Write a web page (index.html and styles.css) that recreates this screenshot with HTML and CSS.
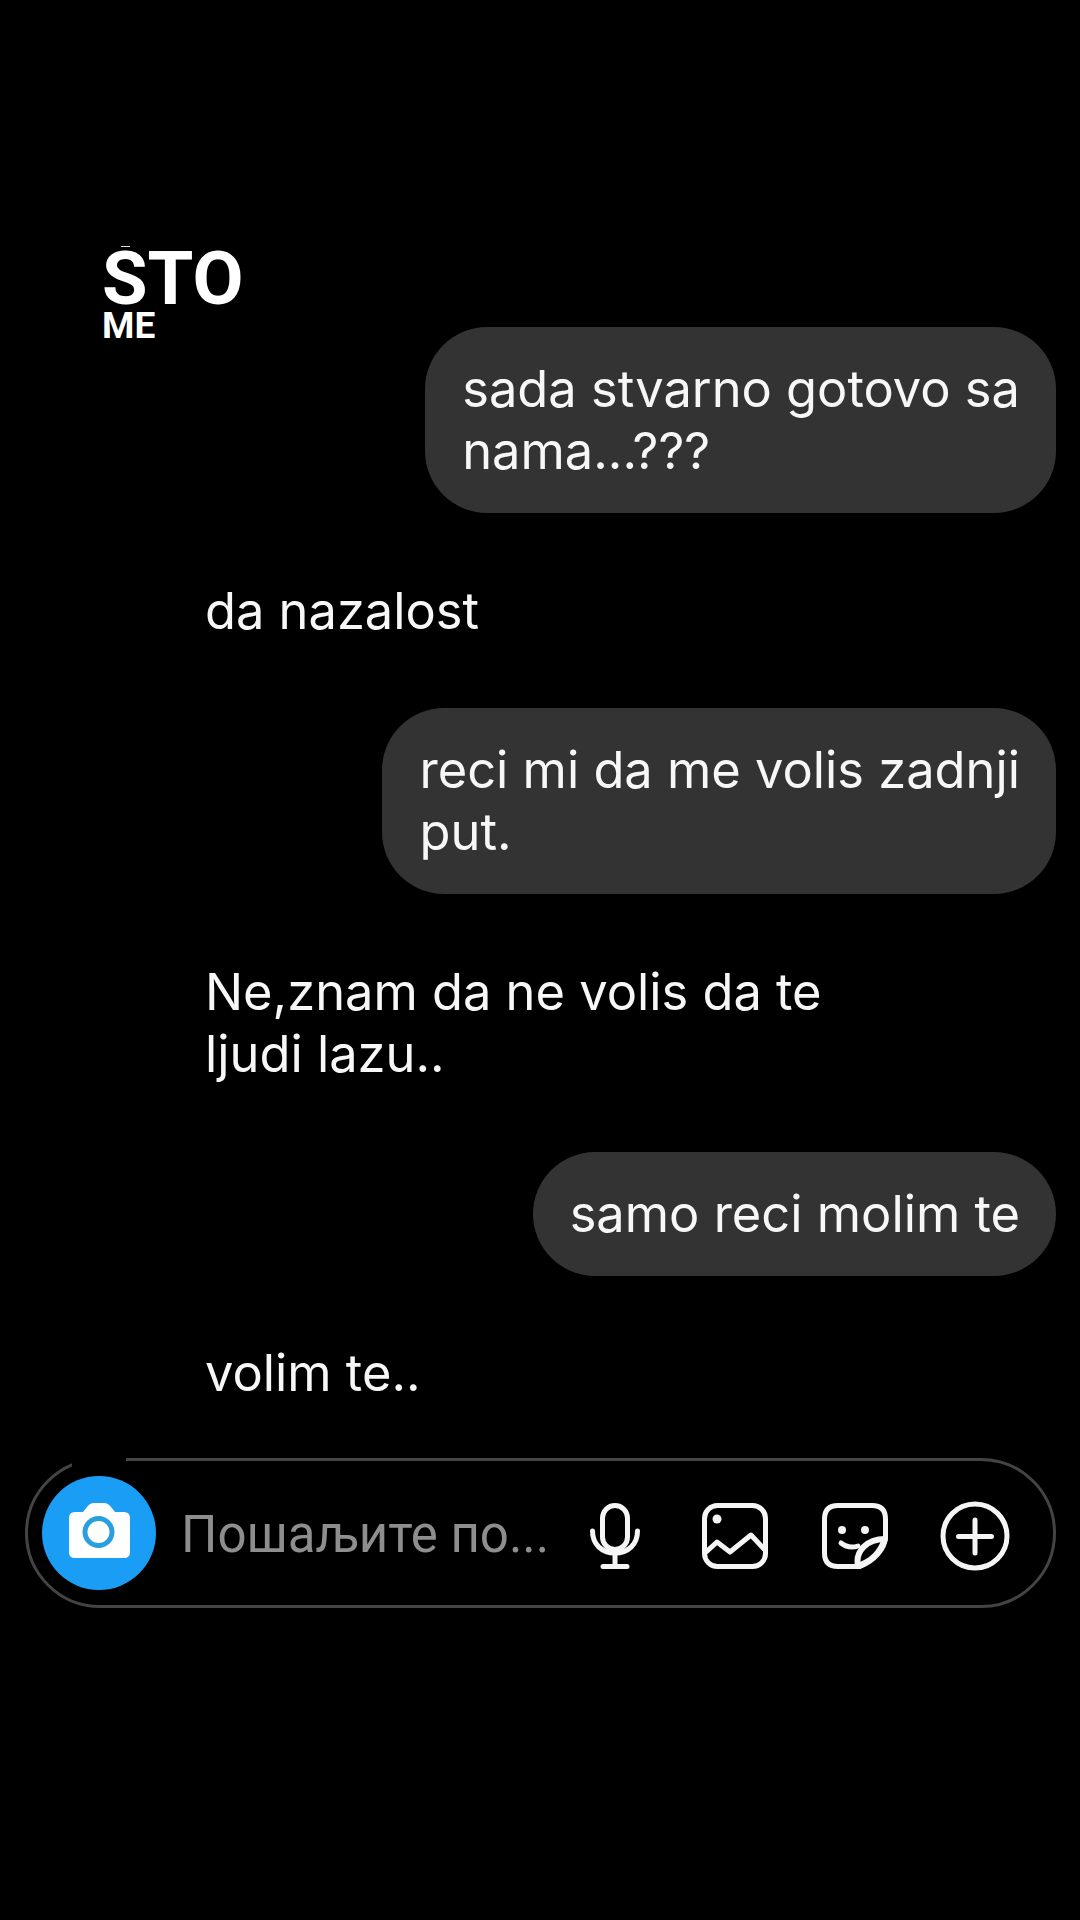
FILE: index.html
```html
<!DOCTYPE html>
<html>
	<head>
		<meta charset="utf-8">
		<title>Chat</title>
		<link rel="stylesheet" href="styles.css">
	</head>
	<body>
		<div class="caption">
			<div class="caption-big">STO</div>
			<div class="caption-small">ME</div>
		</div>

		<div class="thread">
			<div class="msg sent">sada stvarno gotovo sa<br>nama...???</div>
			<div class="msg received">da nazalost</div>
			<div class="msg sent">reci mi da me volis zadnji<br>put.</div>
			<div class="msg received">Ne,znam da ne volis da te<br>ljudi lazu..</div>
			<div class="msg sent">samo reci molim te</div>
			<div class="msg received">volim te..</div>
		</div>

		<div class="composer">
			<div class="composer-gap"></div>
			<div class="camera">
				<svg width="61" height="55" viewBox="0 0 61 55">
					<path class="camera-body" d="M6 9h8l4-5q3-4 7-4h10q4 0 7 4l4 5h9q6 0 6 6v34q0 6-6 6H6q-6 0-6-6V15q0-6 6-6z"/>
					<circle class="camera-lens" cx="29.500" cy="29" r="13.500"/>
				</svg>
			</div>
			<div class="placeholder">Пошаљите по...</div>
			<div class="icon-slot">
				<svg width="50" height="66" viewBox="0 0 50 66" class="icon">
					<rect x="12.5" y="2.5" width="25" height="44" rx="12.5"/>
					<path d="M2.5 28c0 13 9 22 22.500 22s22.500-9 22.500-22"/>
					<path d="M25 50v13M13 63.500h24"/>
				</svg>
			</div>
			<div class="icon-slot">
				<svg width="66" height="66" viewBox="0 0 66 66" class="icon">
					<rect x="2.500" y="2.500" width="61" height="61" rx="13"/>
					<circle class="dot" cx="15" cy="16" r="4.500"/>
					<path d="M3 50l12-11 13 10 21-17 14 15"/>
				</svg>
			</div>
			<div class="icon-slot">
				<svg width="66" height="66" viewBox="0 0 66 66" class="icon">
					<path d="M38 63.500H16q-13.500 0-13.500-13.500V16Q2.500 2.500 16 2.500h34q13.500 0 13.500 13.500v18C63 46 52 58 38 63.500z"/>
					<circle class="dot" cx="20" cy="27" r="4"/>
					<circle class="dot" cx="43" cy="27" r="4"/>
					<path d="M19 40c5 4 11 5 17 3"/>
					<path class="peel" d="M36 63c-3-15 9-27 27-27C58 50 50 58 36 63z"/>
				</svg>
			</div>
			<div class="icon-slot">
				<svg width="70" height="70" viewBox="0 0 70 70" class="icon">
					<circle cx="35" cy="35" r="32"/>
					<path d="M35 19v33M18.500 35.500h33"/>
				</svg>
			</div>
		</div>
	</body>
</html>
```

FILE: styles.css
```css
html, body {
	margin: 0;
	height: 100%;
}
body {
	background-color: #000;
	color: #f7f7f7;
	font-family: "Inter", "Liberation Sans", sans-serif;
	overflow: hidden;
	padding-top: 244px;
	box-sizing: border-box;
}

/* caption burned into the video */
.caption {
	margin-left: 102px;
	height: 83px;
	font-family: "Roboto", "Liberation Sans", sans-serif;
	font-weight: bold;
	color: #fff;
}
.caption-big {
	position: relative;
	padding-top: 2px;
	font-size: 74px;
	line-height: 65px;
}
.caption-big::before {
	content: "";
	position: absolute;
	left: 19px;
	top: 2px;
	width: 9px;
	height: 1px;
	background: #ddd;
}
.caption-small {
	margin-top: -1px;
	font-size: 37px;
	line-height: 32px;
}

.thread {
	display: flex;
	flex-direction: column;
	gap: 66.700px;
	padding-right: 24px;
}
.msg {
	font-size: 50.600px;
	line-height: 62px;
}
.sent {
	align-self: flex-end;
	background-color: #333;
	border-radius: 62px;
	padding: 31px 36px 31px 37px;
}
.received {
	margin-left: 205px;
}

.composer {
	position: relative;
	display: flex;
	align-items: center;
	box-sizing: border-box;
	width: 1031px;
	height: 150px;
	margin: 54px 0 0 25px;
	padding: 0 18px 0 14px;
	border: 3px solid #444;
	border-radius: 75px;
}
/* the outline is broken at the top left in the original */
.composer-gap {
	position: absolute;
	left: 44px;
	top: -4px;
	width: 54px;
	height: 10px;
	background: #000;
}
.camera {
	flex: none;
	display: flex;
	align-items: center;
	justify-content: center;
	width: 114px;
	height: 114px;
	border-radius: 50%;
	background-color: #1a9df5;
}
.camera svg {
	margin-bottom: 5px;
}
.camera-body {
	fill: #fff;
}
.camera-lens {
	fill: #fff;
	stroke: #2a9fe0;
	stroke-width: 5;
}
.placeholder {
	flex: 1;
	margin: 2px 0 0 25px;
	font-family: "Roboto", sans-serif;
	font-size: 51px;
	color: #8e8e8e;
	white-space: nowrap;
}
.icon-slot {
	flex: none;
	display: flex;
	justify-content: center;
	width: 120px;
	margin-top: 5px;
}
.icon {
	fill: none;
	stroke: #f5f5f5;
	stroke-width: 5;
	stroke-linecap: round;
	stroke-linejoin: round;
}
.icon .dot {
	fill: #f5f5f5;
	stroke: none;
}
.icon .peel {
	stroke-width: 6;
}
```
